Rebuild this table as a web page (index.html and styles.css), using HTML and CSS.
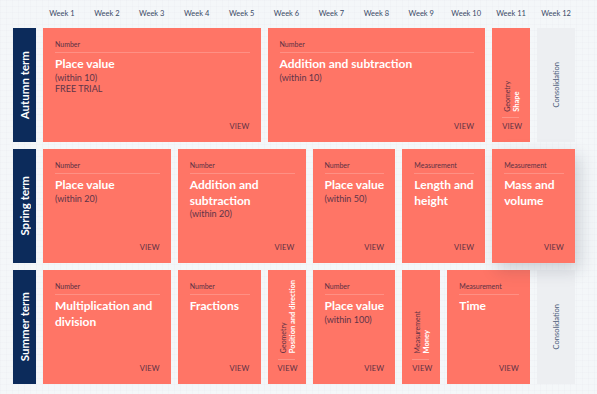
FILE: index.html
```html
<!DOCTYPE html>
<html lang="en">
<head>
<meta charset="utf-8">
<title>Year planner</title>
<link rel="stylesheet" href="styles.css">
</head>
<body>
<div class="planner">
  <div class="corner"></div>
  <div class="week">Week 1</div>
  <div class="week">Week 2</div>
  <div class="week">Week 3</div>
  <div class="week">Week 4</div>
  <div class="week">Week 5</div>
  <div class="week">Week 6</div>
  <div class="week">Week 7</div>
  <div class="week">Week 8</div>
  <div class="week">Week 9</div>
  <div class="week">Week 10</div>
  <div class="week">Week 11</div>
  <div class="week">Week 12</div>

  <div class="term"><span>Autumn term</span></div>
  <div class="card s5">
    <div class="cat">Number</div>
    <div class="title">Place value</div>
    <div class="sub">(within 10)</div>
    <div class="sub">FREE TRIAL</div>
    <div class="view">VIEW</div>
  </div>
  <div class="card s5">
    <div class="cat">Number</div>
    <div class="title">Addition and subtraction</div>
    <div class="sub">(within 10)</div>
    <div class="view">VIEW</div>
  </div>
  <div class="card narrow">
    <div class="vtext"><span class="vcat">Geometry</span><span class="vtitle">Shape</span></div>
    <div class="vline"></div>
    <div class="view">VIEW</div>
  </div>
  <div class="consol"><span>Consolidation</span></div>

  <div class="term"><span>Spring term</span></div>
  <div class="card s3">
    <div class="cat">Number</div>
    <div class="title">Place value</div>
    <div class="sub">(within 20)</div>
    <div class="view">VIEW</div>
  </div>
  <div class="card s3">
    <div class="cat">Number</div>
    <div class="title">Addition and subtraction</div>
    <div class="sub">(within 20)</div>
    <div class="view">VIEW</div>
  </div>
  <div class="card s2">
    <div class="cat">Number</div>
    <div class="title">Place value</div>
    <div class="sub">(within 50)</div>
    <div class="view">VIEW</div>
  </div>
  <div class="card s2">
    <div class="cat">Measurement</div>
    <div class="title">Length and height</div>
    <div class="view">VIEW</div>
  </div>
  <div class="card s2 raised">
    <div class="cat">Measurement</div>
    <div class="title">Mass and volume</div>
    <div class="view">VIEW</div>
  </div>

  <div class="term"><span>Summer term</span></div>
  <div class="card s3">
    <div class="cat">Number</div>
    <div class="title">Multiplication and division</div>
    <div class="view">VIEW</div>
  </div>
  <div class="card s2">
    <div class="cat">Number</div>
    <div class="title">Fractions</div>
    <div class="view">VIEW</div>
  </div>
  <div class="card narrow">
    <div class="vtext"><span class="vcat">Geometry</span><span class="vtitle">Position and direction</span></div>
    <div class="vline"></div>
    <div class="view">VIEW</div>
  </div>
  <div class="card s2">
    <div class="cat">Number</div>
    <div class="title">Place value</div>
    <div class="sub">(within 100)</div>
    <div class="view">VIEW</div>
  </div>
  <div class="card narrow">
    <div class="vtext"><span class="vcat">Measurement</span><span class="vtitle">Money</span></div>
    <div class="vline"></div>
    <div class="view">VIEW</div>
  </div>
  <div class="card s2">
    <div class="cat">Measurement</div>
    <div class="title">Time</div>
    <div class="view">VIEW</div>
  </div>
  <div class="consol"><span>Consolidation</span></div>
</div>
</body>
</html>
```

FILE: styles.css
```css
* {
  box-sizing: border-box;
  margin: 0;
  padding: 0;
}

html,
body {
  width: 597px;
  height: 394px;
  overflow: hidden;
}

body {
  background-color: #f4f7f9;
  background-image:
    linear-gradient(rgba(190, 200, 212, 0.06) 1px, transparent 1px),
    linear-gradient(90deg, rgba(190, 200, 212, 0.06) 1px, transparent 1px);
  background-size: 6px 6px;
  font-family: Lato, "Noto Sans", sans-serif;
  color: #0c2b5b;
}

.planner {
  display: grid;
  grid-template-columns: 23px repeat(12, 1fr);
  grid-template-rows: 20.5px repeat(3, 113.5px);
  column-gap: 7px;
  row-gap: 7.5px;
  width: 575px;
  padding-left: 13px;
}

.week {
  align-self: start;
  padding-top: 7px;
  font-size: 7.5px;
  line-height: 14px;
  text-align: center;
  color: #3b4a66;
  white-space: nowrap;
}

.term {
  background: #0c2b5b;
  color: #fff;
  display: flex;
  align-items: center;
  justify-content: center;
  font-weight: 700;
  font-size: 11.5px;
}

.term span,
.consol span {
  writing-mode: vertical-rl;
  transform: rotate(180deg);
  white-space: nowrap;
}

.card {
  background: #ff7566;
  color: #fff;
  display: flex;
  flex-direction: column;
  padding: 11px 11px 9.5px 12px;
  min-width: 0;
}

.s2 { grid-column: span 2; }
.s3 { grid-column: span 3; }
.s5 { grid-column: span 5; }

.raised {
  position: relative;
  z-index: 1;
  box-shadow: 5px 7px 16px rgba(30, 40, 60, 0.18);
}

.cat {
  font-size: 7px;
  line-height: 10px;
  color: #5b3043;
  padding-bottom: 3px;
  border-bottom: 1px solid rgba(255, 255, 255, 0.2);
}

.title {
  margin-top: 3px;
  font-size: 12px;
  font-weight: 700;
  line-height: 15.5px;
}

.sub {
  font-size: 9px;
  line-height: 11.5px;
  color: #5e3448;
}

.view {
  margin-top: auto;
  align-self: flex-end;
  font-size: 7.5px;
  line-height: 10px;
  color: #5b3043;
  letter-spacing: 0.2px;
}

.card.narrow {
  padding: 0 6px 9.5px 10px;
  justify-content: flex-end;
  align-items: flex-start;
}

.vtext {
  writing-mode: vertical-rl;
  transform: rotate(180deg);
  display: flex;
  flex-direction: column;
  white-space: nowrap;
}

.vcat {
  font-size: 7px;
  line-height: 10px;
  color: #5b3043;
}

.vtitle {
  font-size: 7.5px;
  line-height: 10px;
  font-weight: 700;
  color: #fff;
}

.vline {
  width: 17px;
  height: 1px;
  background: rgba(255, 255, 255, 0.22);
  margin: 5px 0 4.5px;
}

.card.narrow .view {
  margin-top: 0;
  align-self: flex-start;
}

.consol {
  background: #edeff2;
  display: flex;
  align-items: center;
  justify-content: center;
  font-size: 7.5px;
  color: #4b5a78;
}
```
